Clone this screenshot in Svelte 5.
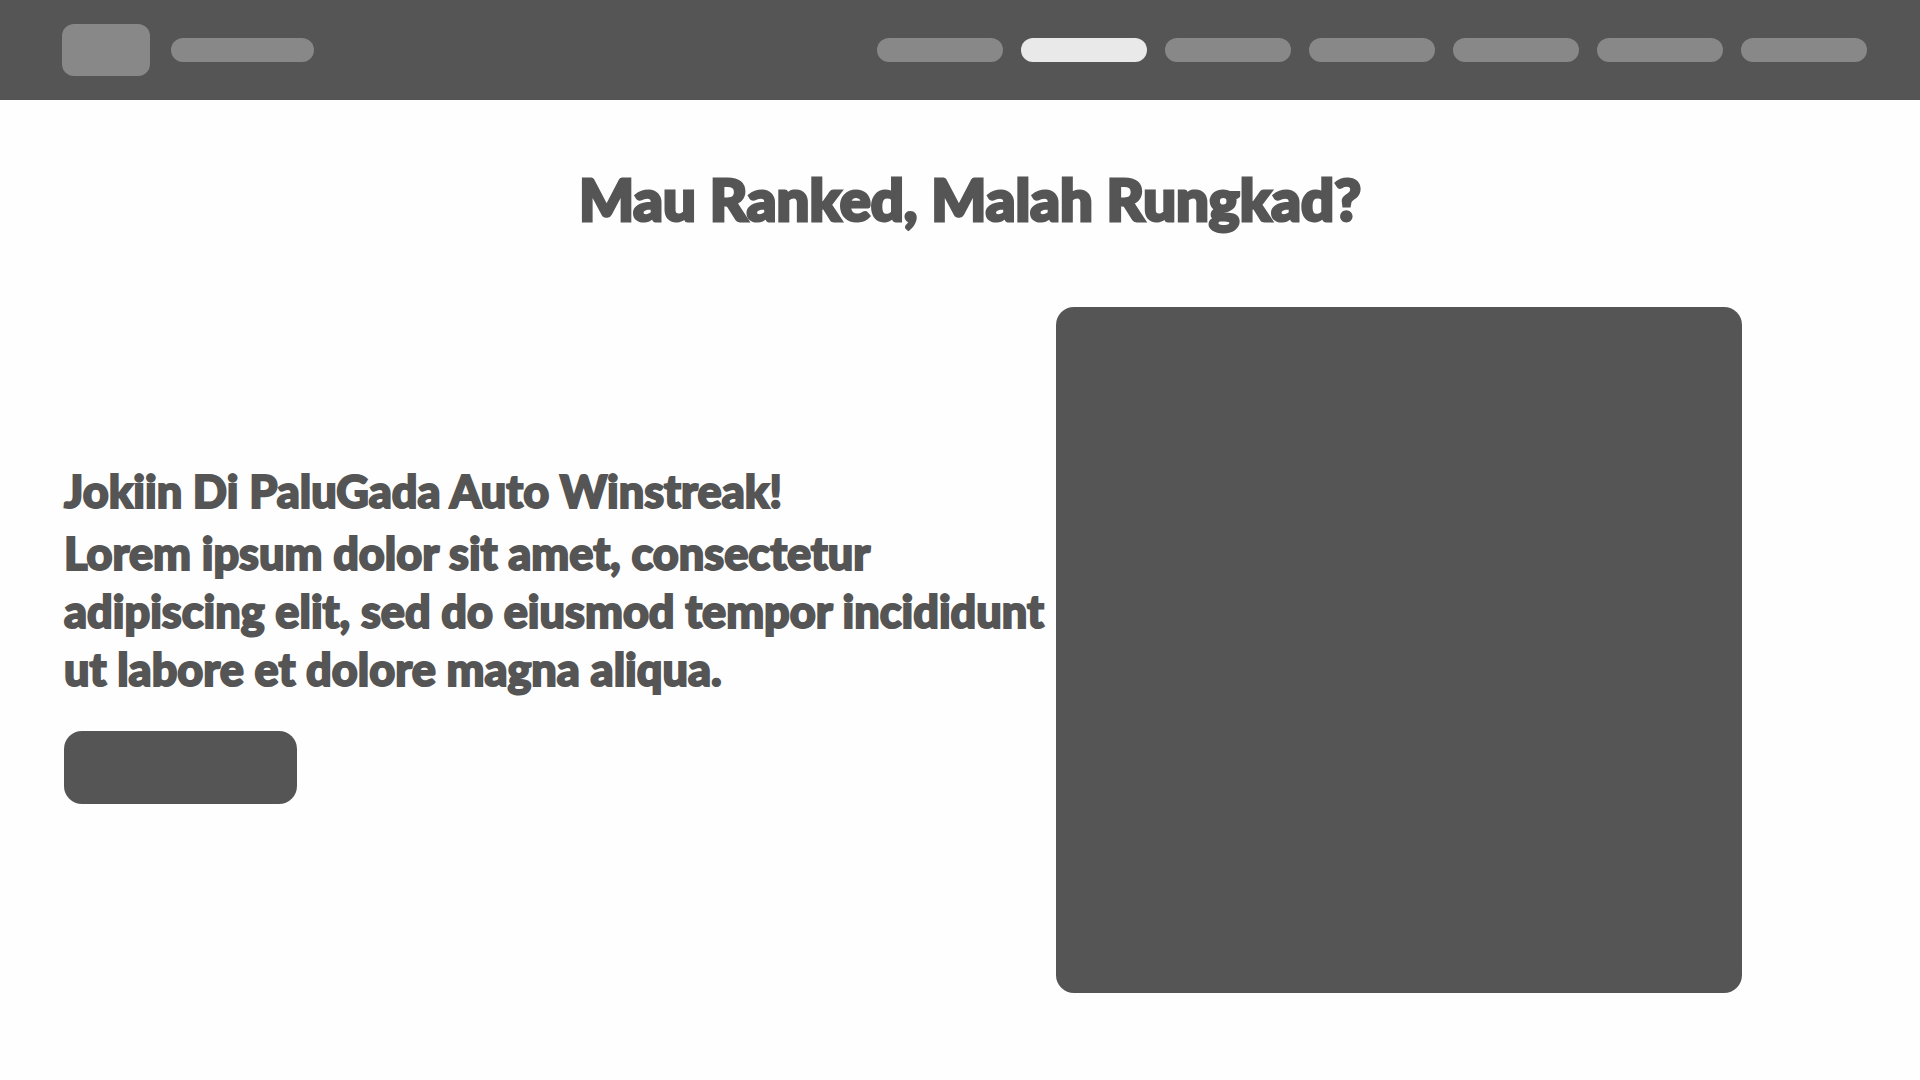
<script>
  const links = ['Home', 'Joki', 'Top up', 'Accounts', 'Reviews', 'Contact', 'Login'];
  const current = 1;
</script>

<header class="bar">
  <a class="logo" href="#home" aria-label="Logo"></a>
  <a class="brand" href="#home" aria-label="PaluGada"></a>
  <nav aria-label="Main">
    {#each links as link, i}
      <a
        class="pill"
        class:active={i === current}
        href="#section-{i}"
        aria-label={link}
        aria-current={i === current ? 'page' : undefined}
      ></a>
    {/each}
  </nav>
</header>

<main>
  <h1>Mau Ranked, Malah Rungkad?</h1>
  <section class="hero">
    <div class="copy">
      <h2>Jokiin Di PaluGada Auto Winstreak!</h2>
      <p>
        Lorem ipsum dolor sit amet, consectetur<br />
        adipiscing elit, sed do eiusmod tempor incididunt<br />
        ut labore et dolore magna aliqua.
      </p>
      <button type="button" aria-label="Order now"></button>
    </div>
    <div class="art"></div>
  </section>
</main>

<style>
  :global(body) {
    margin: 0;
    background: #fefefe;
    color: #555;
    font-family: Lato, 'Open Sans', sans-serif;
    font-weight: 900;
  }

  .bar {
    display: flex;
    align-items: center;
    box-sizing: border-box;
    height: 100px;
    padding: 0 53px 0 62px;
    background: #555;
  }

  .logo {
    width: 88px;
    height: 52px;
    border-radius: 12px;
    background: #888;
  }

  .brand {
    width: 143px;
    height: 24px;
    margin-left: 21px;
    border-radius: 12px;
    background: #888;
  }

  nav {
    display: flex;
    gap: 18px;
    margin-left: auto;
  }

  .pill {
    width: 126px;
    height: 24px;
    border-radius: 12px;
    background: #888;
  }

  .pill.active {
    background: #e9e9e9;
  }

  h1 {
    margin: 0;
    padding: 63px 0 72px 20px;
    font-size: 58px;
    line-height: 72px;
    font-weight: 900;
    text-align: center;
    -webkit-text-stroke: 3px #555;
  }

  .hero {
    display: grid;
    grid-template-columns: 992fr 686fr;
    align-items: center;
    padding: 0 178px 87px 64px;
  }

  .copy {
    min-width: 0;
    padding-bottom: 34px;
    font-size: 45px;
    line-height: 58px;
    white-space: nowrap;
    -webkit-text-stroke: 2px #555;
  }

  h2 {
    margin: 0 0 4px;
    font-size: inherit;
    font-weight: 900;
  }

  p {
    margin: 0 0 33px;
  }

  button {
    display: block;
    width: 233px;
    height: 73px;
    padding: 0;
    border: 0;
    border-radius: 18px;
    background: #555;
  }

  .art {
    aspect-ratio: 1;
    border-radius: 18px;
    background: #555;
  }
</style>
